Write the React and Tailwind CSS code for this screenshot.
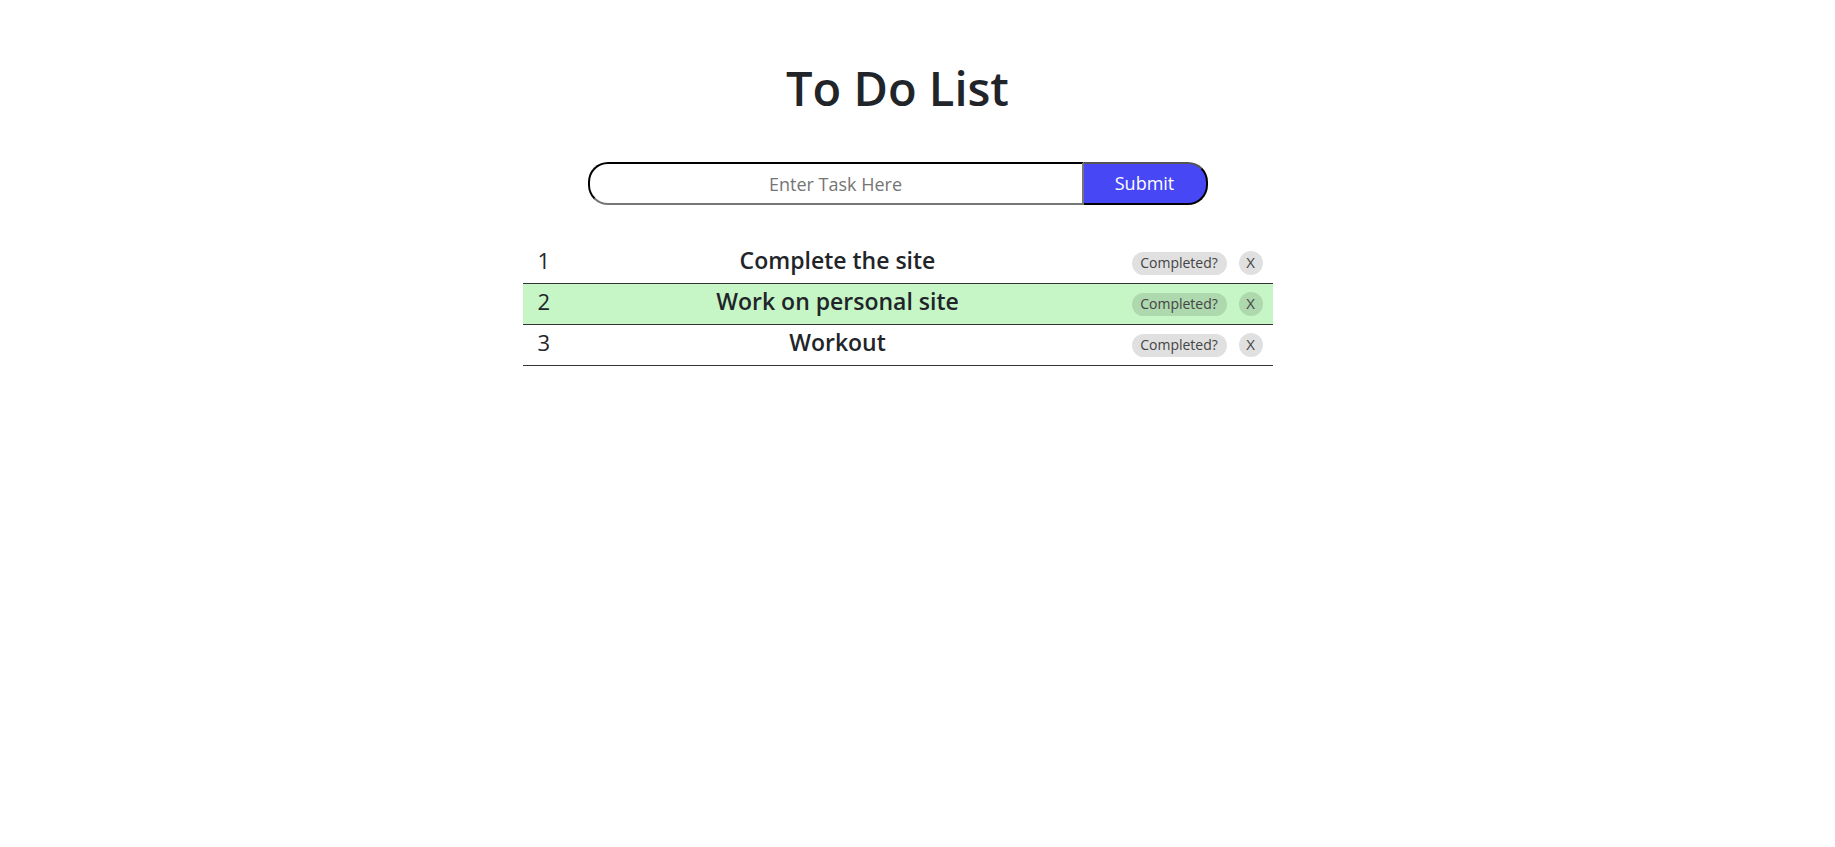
import { useState } from 'react'

const initialTasks = [
  { id: 1, text: 'Complete the site', done: false },
  { id: 2, text: 'Work on personal site', done: true },
  { id: 3, text: 'Workout', done: false },
]

const TaskRow = ({ index, task }) => (
  <div
    className={`flex items-center h-[41px] border-b border-[#333] ${task.done ? 'bg-[#c6f6c6]' : 'bg-white'}`}
  >
    <div className="w-[44px] pl-[15px] pb-[6px] text-[22px] text-[#212529]">{index}</div>
    <div className="flex-1 pb-[5px] text-center text-[23px] font-semibold text-[#212529]">{task.text}</div>
    <div className="flex items-center gap-[12px] pl-[23px] pr-[10px]">
      <button className="h-[23px] w-[95px] rounded-full bg-black/[0.12] text-[14px] leading-none text-[#444]">
        Completed?
      </button>
      <button className="flex h-[24px] w-[24px] items-center justify-center rounded-full bg-black/[0.12] pb-[1px] text-[15px] leading-none text-[#444]">
        X
      </button>
    </div>
  </div>
)

export default function App() {
  const [tasks] = useState(initialTasks)
  const [value, setValue] = useState('')

  return (
    <div className="min-h-screen bg-white pr-[40px] font-['Segoe_UI','Open_Sans',sans-serif]">
      <h1 className="pt-[59px] text-center text-[47px] leading-[58px] font-semibold text-[#212529]">To Do List</h1>

      <form className="mt-[45px] flex justify-center" onSubmit={(e) => e.preventDefault()}>
        <input
          value={value}
          onChange={(e) => setValue(e.target.value)}
          placeholder="Enter Task Here"
          className="h-[43px] w-[496px] rounded-l-[20px] border-2 border-t-black border-l-black border-b-[#767676] border-r-[#767676] text-center text-[18px] outline-none placeholder:text-[#757575]"
        />
        <button className="h-[43px] w-[124px] rounded-r-[20px] border-2 border-l-0 border-t-[#555] border-r-black border-b-black bg-[#4747f5] text-[18px] text-white">
          Submit
        </button>
      </form>

      <div className="mx-auto mt-[38px] w-[750px]">
        {tasks.map((task, i) => (
          <TaskRow key={task.id} index={i + 1} task={task} />
        ))}
      </div>
    </div>
  )
}
